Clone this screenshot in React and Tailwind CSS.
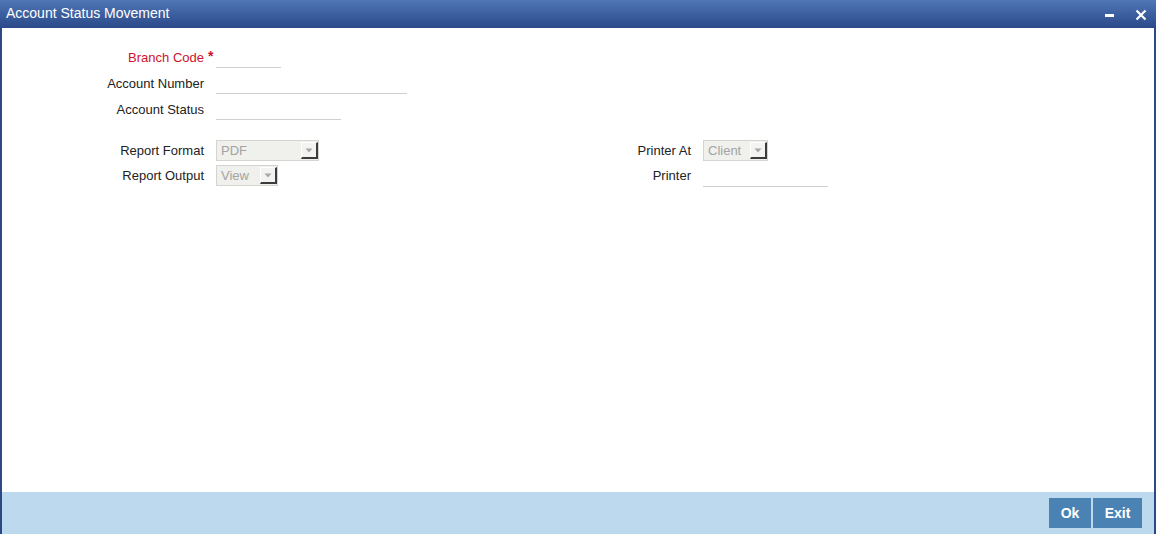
import React from "react";

function Select({ value, width }) {
  return (
    <div
      className="flex items-stretch h-[21px] border border-[#d4d4d0] bg-[#f0f0ec]"
      style={{ width }}
    >
      <div className="flex-1 flex items-center pl-[4px] text-[13px] text-[#a3a3a3] leading-none">
        {value}
      </div>
      <div className="w-[17px] my-[1px] mr-0 flex items-center justify-center bg-[#f3f3f1] border-l border-t border-[#ffffff] border-r-2 border-b-2 border-r-[#3c3c3c] border-b-[#3c3c3c]">
        <svg width="8" height="5" viewBox="0 0 8 5">
          <polygon points="0.5,0.5 7.5,0.5 4,4.5" fill="#a8a8a8" />
        </svg>
      </div>
    </div>
  );
}

function TextRow({ label, width, required }) {
  return (
    <div className="flex items-center h-[26px]">
      <div
        className={
          "w-[202px] text-right text-[13px] leading-none " +
          (required ? "text-[#d0122b]" : "text-[#222222]")
        }
      >
        {label}
      </div>
      <div className="w-[12px] h-full relative">
        {required && (
          <span className="absolute left-[4px] top-[5px] text-[#d0122b] text-[14px] font-bold leading-none">
            *
          </span>
        )}
      </div>
      <div className="h-[21px] self-start mt-[3px] border-b border-[#cfcfcf]" style={{ width }} />
    </div>
  );
}

export default function App() {
  return (
    <div
      className="w-[1156px] h-[541px] bg-white flex flex-col overflow-hidden"
      style={{ fontFamily: '"Liberation Sans", Arial, sans-serif' }}
    >
      <div className="h-[534px] flex flex-col border-l-2 border-r-2 border-[#2b4984]">
        <div className="h-[28px] flex items-center justify-between -mx-[2px] pl-[6px] pr-[9px] bg-gradient-to-b from-[#5077b6] to-[#2a4989]">
          <span className="text-white text-[14px] leading-none mb-[2px]">Account Status Movement</span>
          <div className="flex items-center gap-[21px] text-white">
            <div className="w-[9px] h-[3px] bg-white mt-[3px]" />
            <svg width="12" height="12" viewBox="0 0 12 12" className="mt-[2px]">
              <path d="M1.5 1.5 L10.5 10.5 M10.5 1.5 L1.5 10.5" stroke="white" strokeWidth="2.2" />
            </svg>
          </div>
        </div>
        <div className="flex-1 flex flex-col pt-[16px]">
          <TextRow label="Branch Code" width={65} required />
          <TextRow label="Account Number" width={191} />
          <TextRow label="Account Status" width={125} />
          <div className="flex mt-[16px]">
            <div className="w-[598px] flex flex-col">
              <div className="flex items-center h-[25px]">
                <div className="w-[202px] text-right text-[13px] text-[#222222] leading-none">Report Format</div>
                <div className="ml-[12px]">
                  <Select value="PDF" width={103} />
                </div>
              </div>
              <div className="flex items-center h-[25px]">
                <div className="w-[202px] text-right text-[13px] text-[#222222] leading-none">Report Output</div>
                <div className="ml-[12px]">
                  <Select value="View" width={62} />
                </div>
              </div>
            </div>
            <div className="flex flex-col">
              <div className="flex items-center h-[25px]">
                <div className="w-[91px] text-right text-[13px] text-[#222222] leading-none">Printer At</div>
                <div className="ml-[12px]">
                  <Select value="Client" width={65} />
                </div>
              </div>
              <div className="flex items-center h-[25px]">
                <div className="w-[91px] text-right text-[13px] text-[#222222] leading-none">Printer</div>
                <div className="ml-[12px] w-[125px] h-[24px] self-start border-b border-[#cfcfcf]" />
              </div>
            </div>
          </div>
        </div>
        <div className="h-[42px] bg-[#bdd9ed] flex items-center justify-end pr-[12px] gap-[2px]">
          <button className="h-[30px] w-[42px] bg-[#4a82b3] text-white text-[14px] font-bold">Ok</button>
          <button className="h-[30px] w-[49px] bg-[#4a82b3] text-white text-[14px] font-bold">Exit</button>
        </div>
      </div>
    </div>
  );
}
